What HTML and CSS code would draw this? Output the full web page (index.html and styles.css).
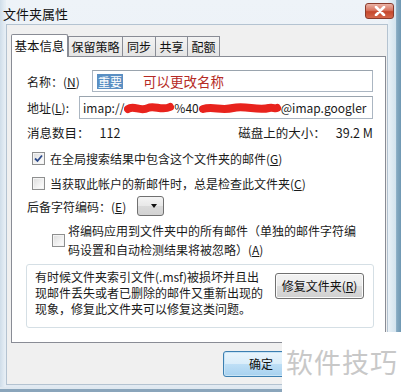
FILE: index.html
```html
<!DOCTYPE html>
<html lang="zh-CN">
<head>
  <meta charset="UTF-8">
  <title>文件夹属性</title>
  <link rel="stylesheet" href="styles.css">
</head>
<body>
  <div class="window">
    <div class="titlebar">
      <span class="title">文件夹属性</span>
      <span class="close">
        <svg width="12" height="10" viewBox="0 0 12 10"><path d="M2 1 L10 9 M10 1 L2 9" stroke="#fff" stroke-width="2.6" stroke-linecap="round"/></svg>
      </span>
    </div>

    <div class="client">
      <div class="tabs">
        <div class="tab active">基本信息</div>
        <div class="tab inactive w55">保留策略</div>
        <div class="tab inactive w34">同步</div>
        <div class="tab inactive w33">共享</div>
        <div class="tab inactive w33">配额</div>
      </div>

      <div class="panel">
        <div class="row field-row name-row">
          <span class="label name-label">名称：(<u>N</u>)</span>
          <div class="input">
            <span class="selected">重要</span>
            <span class="note">可以更改名称</span>
          </div>
        </div>

        <div class="row field-row addr-row">
          <span class="label addr-label">地址(<u>L</u>):</span>
          <div class="input addr">
            <span>imap://</span>
            <svg class="scribble" width="50" height="14" viewBox="0 0 50 14"><path d="M4 8 C10 4 16 11 24 7 C30 4 38 10 46 6" stroke="#e8231d" stroke-width="8" fill="none" stroke-linecap="round"/></svg>
            <span>%40</span>
            <svg class="scribble" width="82" height="14" viewBox="0 0 82 14"><path d="M4 8 C14 5 22 10 34 7 C46 4 58 10 70 7 C74 6 76 8 78 7" stroke="#e8231d" stroke-width="8" fill="none" stroke-linecap="round"/></svg>
            <span>@imap.googler</span>
          </div>
        </div>

        <div class="row stats-row">
          <span>消息数目：<span class="count">112</span></span>
          <span>磁盘上的大小：<span class="size">39.2 M</span></span>
        </div>

        <div class="row check-row cb1">
          <span class="checkbox checked">
            <svg width="9" height="9" viewBox="0 0 9 9"><path d="M1 4.5 L3.5 7 L8 1.5" stroke="#2d4a8a" stroke-width="1.8" fill="none"/></svg>
          </span>
          <span>在全局搜索结果中包含这个文件夹的邮件(<u>G</u>)</span>
        </div>

        <div class="row check-row cb2">
          <span class="checkbox"></span>
          <span>当获取此帐户的新邮件时，总是检查此文件夹(<u>C</u>)</span>
        </div>

        <div class="row enc-row">
          <span class="label">后备字符编码：(<u>E</u>)</span>
          <span class="dropdown"><span class="arrow"></span></span>
        </div>

        <div class="row check-row cb3">
          <span class="checkbox"></span>
          <span class="two-line">将编码应用到文件夹中的所有邮件（单独的邮件字符编<br>码设置和自动检测结果将被忽略）(<u>A</u>)</span>
        </div>

        <div class="groupbox">
          <p class="repair-text">有时候文件夹索引文件(.msf)被损坏并且出<br>现邮件丢失或者已删除的邮件又重新出现的<br>现象，修复此文件夹可以修复这类问题。</p>
          <button class="btn repair">修复文件夹(<u>R</u>)</button>
        </div>
      </div>

      <div class="footer">
        <button class="btn ok">确定</button>
      </div>
    </div>

    <div class="watermark">软件技巧</div>
  </div>
</body>
</html>
```

FILE: styles.css
```css
html, body {
  margin: 0;
  padding: 0;
  width: 401px;
  height: 392px;
  overflow: hidden;
  background: #fff;
}

body {
  font-family: "Noto Sans CJK SC", "Noto Sans", sans-serif;
  font-size: 12px;
  color: #1a1a1a;
}

u {
  text-decoration: underline;
  text-underline-offset: 1px;
}

.window {
  position: relative;
  width: 401px;
  height: 392px;
  box-sizing: border-box;
  display: flex;
  flex-direction: column;
  padding-bottom: 7px;
  background:
    linear-gradient(#dfe8f0 0 2px, #8aa5bb 2px) left bottom / 100% 5px no-repeat,
    linear-gradient(to right, #e9f1f7, #d3e3ee 60%, #86aac2 66%, #6f98b3) right top / 13px 100% no-repeat,
    linear-gradient(to right, #cfdde9, #e6eef5 5px, #e6eef5) left top / 6px 100% no-repeat,
    linear-gradient(#eef3f8, #e2eaf2);
}

/* title bar */
.titlebar {
  height: 24px;
  display: flex;
  align-items: center;
  justify-content: space-between;
  padding: 0 7px 0 3px;
  box-sizing: border-box;
}

.title {
  font-size: 13px;
  line-height: 16px;
  margin-top: 4px;
  color: #111;
}

.close {
  width: 29px;
  height: 16px;
  box-sizing: border-box;
  margin-top: -3px;
  border: 1px solid #8a3b2c;
  border-radius: 3px;
  background: linear-gradient(#eab3a6, #d87560 45%, #c5472c 55%, #d4684c);
  display: flex;
  align-items: center;
  justify-content: center;
}

/* client area */
.client {
  flex: 1;
  margin: 0 13px 0 6px;
  border: 1px solid #b4c3d1;
  background: #f0f0f0;
  display: flex;
  flex-direction: column;
}

.tabs {
  display: flex;
  align-items: flex-end;
  height: 31px;
  padding-left: 4px;
  box-sizing: border-box;
}

.tab {
  box-sizing: border-box;
  border: 1px solid #898c95;
  border-bottom: 0;
  display: flex;
  align-items: center;
  justify-content: center;
  line-height: 14px;
  color: #111;
}

.tab.active {
  width: 57px;
  height: 23px;
  background: #fff;
  position: relative;
  z-index: 1;
  margin-bottom: -1px;
  border-radius: 2px 2px 0 0;
  font-size: 12.5px;
}

.tab.inactive {
  height: 20px;
  background: linear-gradient(#f3f3f3, #e4e4e4);
  padding-top: 1px;
}

.tab.inactive + .tab.inactive {
  margin-left: -1px;
}

.w55 { width: 55px; }
.w34 { width: 34px; }
.w33 { width: 33px; }

/* panel */
.panel {
  width: 375px;
  height: 287px;
  margin-left: 4px;
  box-sizing: border-box;
  border: 1px solid #898c95;
  background: #fff;
  padding: 13px 12px 0 15px;
}

.row {
  display: flex;
  align-items: center;
}

.field-row .input {
  flex: 1;
  box-sizing: border-box;
  border: 1px solid #abb6c2;
  border-top-color: #9aa4ae;
  display: flex;
  align-items: center;
  white-space: nowrap;
  overflow: hidden;
}

.name-row {
  height: 22px;
}

.name-label {
  width: 65px;
}

.name-row .input {
  height: 22px;
  padding-left: 4px;
}

.selected {
  background: #5a8fc3;
  color: #fff;
  line-height: 15px;
  height: 15px;
  padding: 0 1px;
}

.note {
  color: #b52a25;
  font-size: 13.5px;
  margin-left: 20px;
  line-height: 16px;
}

.addr-row {
  height: 23px;
  margin-top: 4px;
}

.addr-label {
  width: 52px;
}

.addr {
  height: 23px;
  padding-left: 3px;
  font-size: 12px;
}

.scribble {
  display: block;
  flex-shrink: 0;
}

.stats-row {
  height: 18px;
  margin-top: 4px;
  justify-content: space-between;
  font-size: 12.5px;
}

.count {
  margin-left: 10px;
}

.size {
  margin-left: 10px;
}

.check-row {
  height: 18px;
}

.cb1 {
  margin-top: 8px;
}

.cb2 {
  margin-top: 7px;
}

.checkbox {
  width: 13px;
  height: 13px;
  box-sizing: border-box;
  border: 1px solid #8e8f8f;
  background: linear-gradient(135deg, #dcdcdc, #f6f6f6 70%, #fff);
  box-shadow: inset 0 0 0 1px #f4f4f4;
  display: flex;
  align-items: center;
  justify-content: center;
  flex-shrink: 0;
}

.cb1 .checkbox,
.cb2 .checkbox {
  margin: 0 5px 0 5px;
}

.enc-row {
  height: 20px;
  margin-top: 4px;
}

.enc-row .label {
  width: 110px;
}

.dropdown {
  width: 27px;
  height: 20px;
  box-sizing: border-box;
  border: 1px solid #707070;
  border-radius: 3px;
  background: linear-gradient(#f4f4f4, #e8e8e8 50%, #dadada 51%, #d2d2d2);
  display: flex;
  align-items: center;
  justify-content: center;
  padding-left: 6px;
}

.arrow {
  width: 0;
  height: 0;
  border-left: 3.5px solid transparent;
  border-right: 3.5px solid transparent;
  border-top: 4px solid #111;
}

.cb3 {
  height: 38px;
  margin-top: 5px;
}

.cb3 .checkbox {
  margin: 0 3px 0 25px;
}

.two-line {
  line-height: 19px;
}

/* repair box */
.groupbox {
  width: 348px;
  height: 64px;
  margin: 5px 0 0 -1px;
  box-sizing: border-box;
  border: 1px solid #d5dfe5;
  border-radius: 3px;
  display: flex;
  justify-content: space-between;
  align-items: flex-start;
  padding: 4px 9px 0 8px;
}

.repair-text {
  margin: 0;
  line-height: 16px;
}

.btn {
  font-family: "Noto Sans CJK SC", "Noto Sans", sans-serif;
  font-size: 12px;
  color: #111;
  border: 1px solid #707070;
  border-radius: 3px;
  background: linear-gradient(#f2f2f2, #ebebeb 50%, #dddddd 51%, #cfcfcf);
  box-shadow: inset 0 0 0 1px #fbfbfb;
  padding: 0;
  line-height: 14px;
}

.repair {
  width: 89px;
  height: 26px;
  margin-top: 4px;
}

.footer {
  display: flex;
  padding: 8px 0 0 216px;
}

.footer .btn {
  width: 76px;
  height: 26px;
}

.ok {
  border-color: #3c7fb1;
  box-shadow: inset 0 0 0 1px #c8e4f6;
  background: linear-gradient(#eaf5fc, #d9edfa 50%, #bedff6 51%, #a7d1ef);
}

/* overlaid watermark */
.watermark {
  position: absolute;
  right: 0;
  bottom: 0;
  width: 119px;
  height: 60px;
  background: #fff;
  color: #c8c8c8;
  font-size: 27px;
  line-height: 60px;
  padding-left: 4px;
  box-sizing: border-box;
  letter-spacing: 1px;
  white-space: nowrap;
}
```
